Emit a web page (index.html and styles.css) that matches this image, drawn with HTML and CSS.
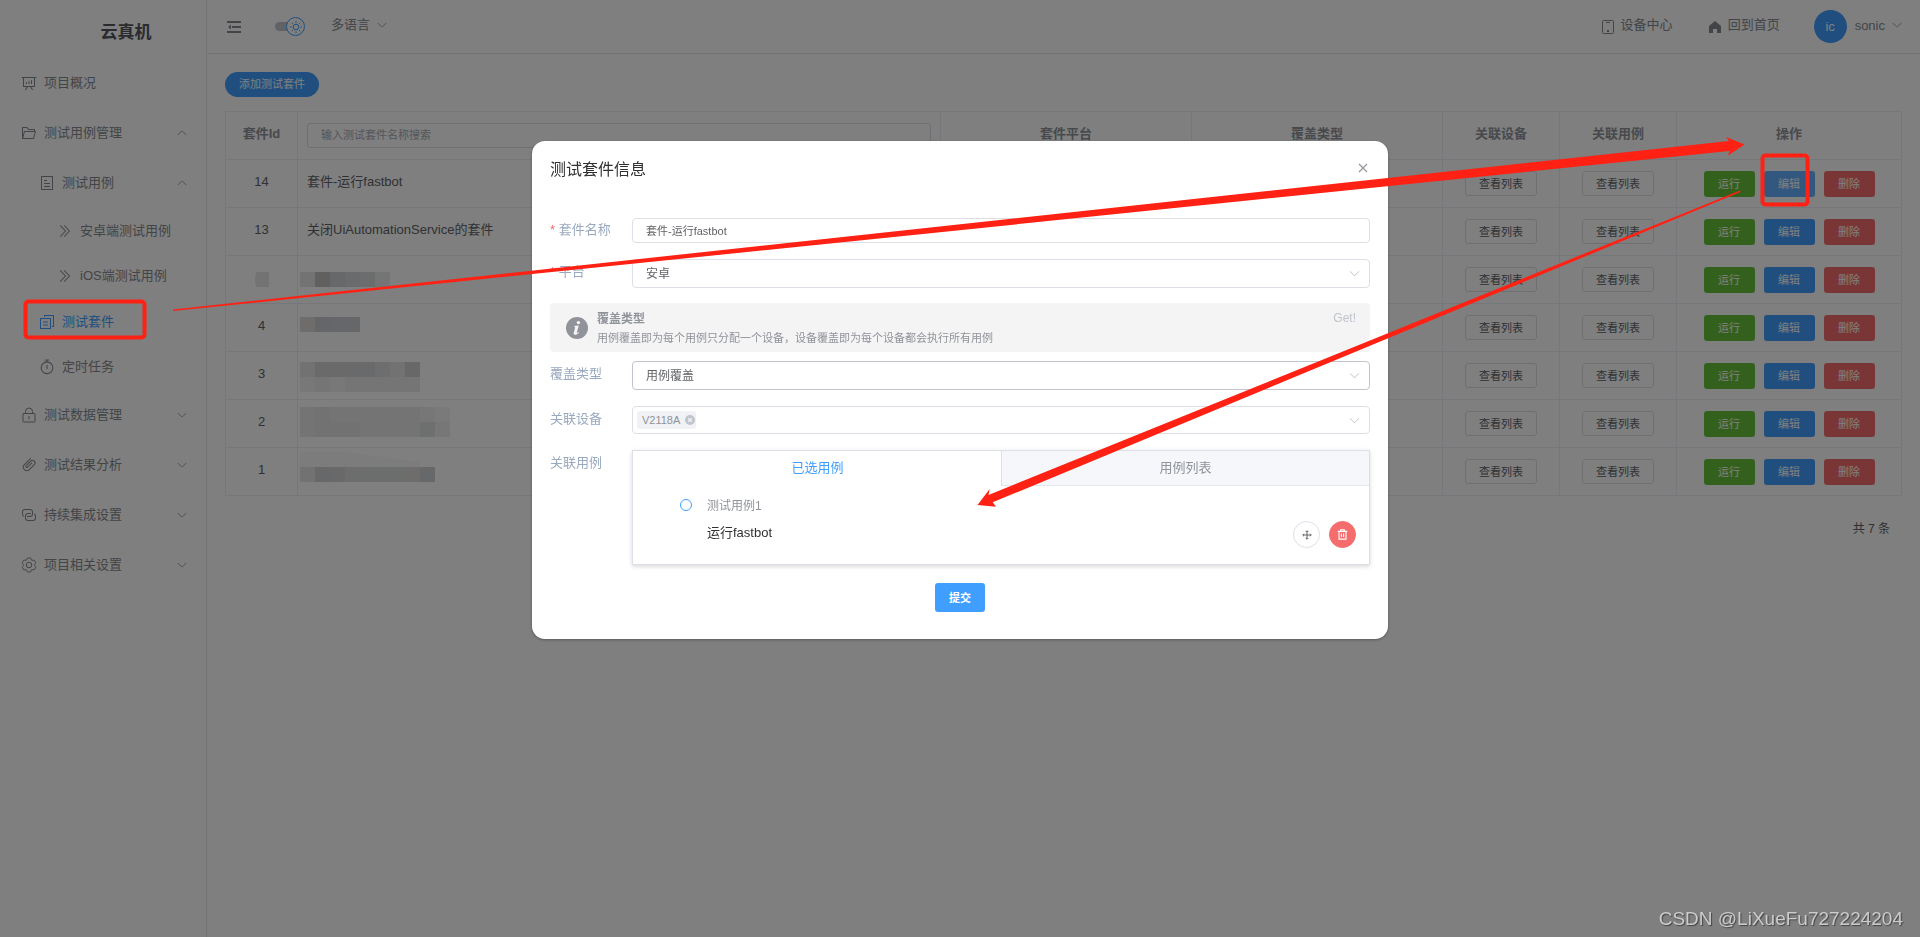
FILE: index.html
```html
<!DOCTYPE html>
<html lang="zh-CN">
<head>
<meta charset="utf-8">
<title>云真机</title>
<link rel="stylesheet" href="styles.css">
</head>
<body>
<svg class="sprite" aria-hidden="true">
  <symbol id="down" viewBox="0 0 1024 1024"><path d="M831.872 340.864 512 652.672 192.128 340.864a30.592 30.592 0 0 0-42.752 0 29.12 29.12 0 0 0 0 41.6L489.664 714.24a32 32 0 0 0 44.672 0l340.288-331.712a29.12 29.12 0 0 0 0-41.728 30.592 30.592 0 0 0-42.752 0z"/></symbol>
  <symbol id="board" viewBox="0 0 1024 1024"><path d="m665.216 768 110.848 192h-73.856L591.36 768H433.024L322.176 960H248.32l110.848-192H160a32 32 0 0 1-32-32V192H64a32 32 0 0 1 0-64h896a32 32 0 1 1 0 64h-64v544a32 32 0 0 1-32 32H665.216zM832 192H192v512h640V192zM352 448a32 32 0 0 1 32 32v64a32 32 0 0 1-64 0v-64a32 32 0 0 1 32-32zm160-64a32 32 0 0 1 32 32v128a32 32 0 0 1-64 0V416a32 32 0 0 1 32-32zm160-64a32 32 0 0 1 32 32v192a32 32 0 1 1-64 0V352a32 32 0 0 1 32-32z"/></symbol>
  <symbol id="folder" viewBox="0 0 1024 1024"><path d="M878.08 448H241.92l-96 384h636.16l96-384zM832 384v-64H485.76L357.504 192H128v448l57.92-231.744A32 32 0 0 1 216.96 384H832zm-24.96 512H96a32 32 0 0 1-32-32V160a32 32 0 0 1 32-32h287.872l128.384 128H864a32 32 0 0 1 32 32v96h23.04a32 32 0 0 1 31.04 39.744l-112 448A32 32 0 0 1 807.04 896z"/></symbol>
  <symbol id="tickets" viewBox="0 0 1024 1024"><path d="M192 128v768h640V128H192zm-32-64h704a32 32 0 0 1 32 32v832a32 32 0 0 1-32 32H160a32 32 0 0 1-32-32V96a32 32 0 0 1 32-32zm160 448h384v64H320v-64zm0-192h192v64H320v-64zm0 384h384v64H320v-64z"/></symbol>
  <symbol id="dright" viewBox="0 0 1024 1024"><path d="M452.864 149.312a29.12 29.12 0 0 1 41.728.064L826.24 489.664a32 32 0 0 1 0 44.672L494.592 874.624a29.12 29.12 0 0 1-41.728 0 30.592 30.592 0 0 1 0-42.752L764.736 512 452.864 192a30.592 30.592 0 0 1 0-42.688zm-256 0a29.12 29.12 0 0 1 41.728.064L570.24 489.664a32 32 0 0 1 0 44.672L238.592 874.624a29.12 29.12 0 0 1-41.728 0 30.592 30.592 0 0 1 0-42.752L508.736 512 196.864 192a30.592 30.592 0 0 1 0-42.688z"/></symbol>
  <symbol id="copy" viewBox="0 0 1024 1024"><path d="M128 320v576h576V320H128zm-32-64h640a32 32 0 0 1 32 32v640a32 32 0 0 1-32 32H96a32 32 0 0 1-32-32V288a32 32 0 0 1 32-32zM960 96v704a32 32 0 0 1-32 32h-96v-64h64V128H384v64h-64V96a32 32 0 0 1 32-32h576a32 32 0 0 1 32 32zM256 672h320v64H256v-64zm0-192h320v64H256v-64z"/></symbol>
  <symbol id="timer" viewBox="0 0 1024 1024"><g fill="none" stroke="currentColor" stroke-width="68" stroke-linecap="round"><circle cx="512" cy="560" r="376"/><path d="M512 400v200M400 66h224M512 66v110"/></g></symbol>
  <symbol id="lock" viewBox="0 0 1024 1024"><g fill="none" stroke="currentColor" stroke-width="64" stroke-linecap="round"><rect x="128" y="416" width="768" height="544" rx="32"/><path d="M288 416V288a224 224 0 0 1 448 0v128M512 608v160"/></g></symbol>
  <symbol id="clip" viewBox="0 0 1024 1024"><path d="M602.496 240.448A192 192 0 1 1 874.048 512l-316.8 316.8A256 256 0 0 1 195.2 466.752L602.496 59.456l45.248 45.248L240.448 512A192 192 0 0 0 512 783.552l316.8-316.8a128 128 0 1 0-181.056-181.056L353.6 579.904a32 32 0 1 0 45.248 45.248l294.144-294.144 45.312 45.248L444.096 670.4a96 96 0 1 1-135.744-135.744l294.144-294.208z"/></symbol>
  <symbol id="link" viewBox="0 0 1024 1024"><path d="M640 384v64H448a128 128 0 0 0-128 128v128a128 128 0 0 0 128 128h320a128 128 0 0 0 128-128V576a128 128 0 0 0-64-110.848V394.88c74.56 26.368 128 97.472 128 181.056v128a192 192 0 0 1-192 192H448a192 192 0 0 1-192-192V576a192 192 0 0 1 192-192h192z"/><path d="M384 640v-64h192a128 128 0 0 0 128-128V320a128 128 0 0 0-128-128H256a128 128 0 0 0-128 128v128a128 128 0 0 0 64 110.848v70.272A192.064 192.064 0 0 1 64 448V320a192 192 0 0 1 192-192h320a192 192 0 0 1 192 192v128a192 192 0 0 1-192 192H384z"/></symbol>
  <symbol id="gear" viewBox="0 0 1024 1024"><g fill="none" stroke="currentColor" stroke-width="64"><path d="M600.704 64a32 32 0 0 1 30.464 22.208l35.2 109.376c14.784 7.232 28.928 15.36 42.432 24.512l112.384-24.192a32 32 0 0 1 34.432 15.36L944.32 364.8a32 32 0 0 1-4.032 37.504l-77.12 85.12a357.12 357.12 0 0 1 0 49.024l77.12 85.248a32 32 0 0 1 4.032 37.504l-88.704 153.6a32 32 0 0 1-34.432 15.296L708.8 803.904c-13.44 9.088-27.648 17.28-42.368 24.512l-35.264 109.376A32 32 0 0 1 600.704 960H423.296a32 32 0 0 1-30.464-22.208L357.696 828.48a351.616 351.616 0 0 1-42.56-24.64l-112.32 24.256a32 32 0 0 1-34.432-15.36L79.68 659.2a32 32 0 0 1 4.032-37.504l77.12-85.248a357.12 357.12 0 0 1 0-48.896l-77.12-85.248A32 32 0 0 1 79.68 364.8l88.704-153.6a32 32 0 0 1 34.432-15.296l112.32 24.256c13.568-9.152 27.776-17.408 42.56-24.64l35.2-109.312A32 32 0 0 1 423.232 64z"/><circle cx="512" cy="512" r="176"/></g></symbol>
  <symbol id="fold" viewBox="0 0 14 12"><path d="M0 0h14v2H0zM5 5h9v2H5zM0 10h14v2H0zM1 6l3-2.500v5z"/></symbol>
  <symbol id="phone" viewBox="0 0 12 14"><rect x=".5" y=".5" width="11" height="13" rx="1" fill="none" stroke="currentColor"/><path d="M4 2h4v1H4zM5 10h2v2H5z"/></symbol>
  <symbol id="home" viewBox="0 0 12 12"><path d="M6 0l6 5v7H8V8H4v4H0V5z"/></symbol>
  <symbol id="sun" viewBox="0 0 12 12"><g fill="none" stroke="currentColor" stroke-width="1"><circle cx="6" cy="6" r="2.8"/><path d="M6 0v1.6M6 10.4V12M0 6h1.6M10.4 6H12M1.8 1.8l1.1 1.1M9.1 9.1l1.1 1.1M10.2 1.8L9.1 2.9M2.9 9.1l-1.1 1.1"/></g></symbol>
  <symbol id="close" viewBox="0 0 10 10"><path d="M1 1l8 8M9 1L1 9" fill="none" stroke="currentColor" stroke-width="1.1"/></symbol>
  <symbol id="tagclose" viewBox="0 0 10 10"><circle cx="5" cy="5" r="5"/><path d="M3.2 3.2l3.6 3.6M6.8 3.2L3.2 6.8" stroke="#f0f2f5" stroke-width="1.3"/></symbol>
  <symbol id="info" viewBox="0 0 22 22"><circle cx="11" cy="11" r="11"/><g fill="#f4f4f5"><circle cx="12.4" cy="5.6" r="1.7"/><path d="M8.2 9l4.6-.6-2 7.1c-.2.8.4.7 1.8-.7l.5.5c-1.700 2.100-3.200 2.700-4.300 2.500-1.200-.2-1.300-1.200-1-2.300l1.300-4.700c.2-.8-.1-1-1.100-1z"/></g></symbol>
  <symbol id="move" viewBox="0 0 10 10"><g fill="none" stroke="currentColor" stroke-width="1"><path d="M5 1v8M1 5h8M3.700 2L5 .7 6.300 2M3.700 8L5 9.300 6.300 8M2 3.700L.7 5 2 6.300M8 3.700L9.300 5 8 6.300"/></g></symbol>
  <symbol id="trash" viewBox="0 0 12 12"><g fill="none" stroke="currentColor" stroke-width="1.200"><path d="M.8 2.600h10.400M4 2.400V.8h4v1.600M2.200 2.800v8.200h7.600V2.800M4.800 4.800v4M7.200 4.800v4"/></g></symbol>
</svg>

<div class="app">
  <aside class="sidebar">
    <h1 class="logo">云真机</h1>
    <nav>
      <ul class="menu">
        <li><a class="item" href="#"><svg class="icon"><use href="#board"/></svg>项目概况</a></li>
        <li>
          <a class="item" href="#"><svg class="icon"><use href="#folder"/></svg>测试用例管理<svg class="arrow open"><use href="#down"/></svg></a>
          <ul class="menu">
            <li>
              <a class="item level2" href="#"><svg class="icon"><use href="#tickets"/></svg>测试用例<svg class="arrow open"><use href="#down"/></svg></a>
              <ul class="menu">
                <li><a class="item leaf level3" href="#"><svg class="icon"><use href="#dright"/></svg>安卓端测试用例</a></li>
                <li><a class="item leaf level3" href="#"><svg class="icon"><use href="#dright"/></svg>iOS端测试用例</a></li>
              </ul>
            </li>
            <li><a class="item leaf level2 active" href="#"><svg class="icon"><use href="#copy"/></svg>测试套件</a></li>
            <li><a class="item leaf level2" href="#"><svg class="icon"><use href="#timer"/></svg>定时任务</a></li>
          </ul>
        </li>
        <li><a class="item" href="#"><svg class="icon"><use href="#lock"/></svg>测试数据管理<svg class="arrow"><use href="#down"/></svg></a></li>
        <li><a class="item" href="#"><svg class="icon"><use href="#clip"/></svg>测试结果分析<svg class="arrow"><use href="#down"/></svg></a></li>
        <li><a class="item" href="#"><svg class="icon"><use href="#link"/></svg>持续集成设置<svg class="arrow"><use href="#down"/></svg></a></li>
        <li><a class="item" href="#"><svg class="icon"><use href="#gear"/></svg>项目相关设置<svg class="arrow"><use href="#down"/></svg></a></li>
      </ul>
    </nav>
  </aside>

  <div class="content">
    <header class="topbar">
      <button class="plain" aria-label="折叠菜单"><svg class="fold"><use href="#fold"/></svg></button>
      <button class="plain theme" role="switch" aria-checked="true" aria-label="主题"><span class="track"></span><span class="knob"><svg><use href="#sun"/></svg></span></button>
      <button class="plain lang"><span class="toptext">多语言</span><svg class="arrow"><use href="#down"/></svg></button>
      <span class="spacer"></span>
      <a class="toplink" href="#"><svg class="phone"><use href="#phone"/></svg><span class="toptext">设备中心</span></a>
      <a class="toplink home" href="#"><svg class="house"><use href="#home"/></svg><span class="toptext">回到首页</span></a>
      <button class="plain user"><span class="avatar">ic</span><span class="name">sonic</span><svg class="arrow"><use href="#down"/></svg></button>
    </header>

    <main class="page">
      <button class="add">添加测试套件</button>
      <table class="suites">
        <colgroup><col class="c-id"><col><col class="c-wide"><col class="c-wide"><col class="c-view"><col class="c-view"><col class="c-ops"></colgroup>
        <thead>
          <tr><th>套件Id</th><th class="left control"><input class="search" type="text" placeholder="输入测试套件名称搜索" aria-label="套件名称"></th><th>套件平台</th><th>覆盖类型</th><th>关联设备</th><th>关联用例</th><th>操作</th></tr>
        </thead>
        <tbody>
          <tr><td>14</td><td class="left">套件-运行fastbot</td><td></td><td></td><td class="control"><button class="view">查看列表</button></td><td class="control"><button class="view">查看列表</button></td><td class="control"><div class="ops"><button class="op run">运行</button><button class="op edit hover">编辑</button><button class="op del">删除</button></div></td></tr>
          <tr><td>13</td><td class="left">关闭UiAutomationService的套件</td><td></td><td></td><td class="control"><button class="view">查看列表</button></td><td class="control"><button class="view">查看列表</button></td><td class="control"><div class="ops"><button class="op run">运行</button><button class="op edit">编辑</button><button class="op del">删除</button></div></td></tr>
          <tr><td class="control"><svg class="mask-id" viewBox="0 0 14 15"><path fill="#e6e6e6" d="M1 0h13v15H1L0 8z"/></svg></td><td class="masked"><svg class="mask" viewBox="0 0 160 47"><g transform="translate(0 16)"><path fill="#e6e6e6" d="M0 0h15v15H0z"/><path fill="#c2c1bc" d="M15 0h15v15H15z"/><path fill="#cdd0d5" d="M30 0h15v15H30z"/><path fill="#d5d6d8" d="M45 0h15v15H45z"/><path fill="#d9dada" d="M60 0h15v15H60z"/><path fill="#eaeaea" d="M75 0h15v15H75z"/></g></svg></td><td></td><td></td><td class="control"><button class="view">查看列表</button></td><td class="control"><button class="view">查看列表</button></td><td class="control"><div class="ops"><button class="op run">运行</button><button class="op edit">编辑</button><button class="op del">删除</button></div></td></tr>
          <tr><td>4</td><td class="masked"><svg class="mask" viewBox="0 0 160 47"><g transform="translate(0 13)"><path fill="#dddbd9" d="M0 0h15v15H0z"/><path fill="#c9ccd0" d="M15 0h15v15H15z"/><path fill="#cdcfd4" d="M30 0h15v15H30z"/><path fill="#cdcfd0" d="M45 0h15v15H45z"/></g></svg></td><td></td><td></td><td class="control"><button class="view">查看列表</button></td><td class="control"><button class="view">查看列表</button></td><td class="control"><div class="ops"><button class="op run">运行</button><button class="op edit">编辑</button><button class="op del">删除</button></div></td></tr>
          <tr><td>3</td><td class="masked"><svg class="mask" viewBox="0 0 160 47"><g transform="translate(0 10)"><path fill="#e4e4e4" d="M0 0h15v15H0zM90 0h15v15H90z"/><path fill="#d4d4d4" d="M15 0h45v15H15z"/><path fill="#d3d5d7" d="M60 0h15v15H60z"/><path fill="#dadddb" d="M75 0h15v15H75z"/><path fill="#d0d0d0" d="M105 0h15v15h-15z"/><path fill="#f0f0f0" d="M0 15h15v15H0zM30 15h15v15H30z"/><path fill="#eaeaea" d="M15 15h15v15H15zM45 15h75v15H45z"/></g></svg></td><td></td><td></td><td class="control"><button class="view">查看列表</button></td><td class="control"><button class="view">查看列表</button></td><td class="control"><div class="ops"><button class="op run">运行</button><button class="op edit">编辑</button><button class="op del">删除</button></div></td></tr>
          <tr><td>2</td><td class="masked"><svg class="mask" viewBox="0 0 160 47"><g transform="translate(0 7)"><path fill="#e8e8e8" d="M0 0h120v15H0zM0 15h15v15H0zM60 15h60v15H60z"/><path fill="#e4e4e4" d="M15 0h15v15H15zM15 15h45v15H15z"/><path fill="#efefef" d="M120 0h15v15h-15z"/><path fill="#f4f4f4" d="M135 0h15v15h-15z"/><path fill="#dde0de" d="M120 15h15v15h-15z"/><path fill="#eee" d="M135 15h15v15h-15z"/></g></svg></td><td></td><td></td><td class="control"><button class="view">查看列表</button></td><td class="control"><button class="view">查看列表</button></td><td class="control"><div class="ops"><button class="op run">运行</button><button class="op edit">编辑</button><button class="op del">删除</button></div></td></tr>
          <tr><td>1</td><td class="masked"><svg class="mask" viewBox="0 0 160 47"><g transform="translate(0 4)"><path fill="#f8f8f8" d="M0 0h45l75 10v5H0z"/><path fill="#e4e4e4" d="M0 15h15v15H0z"/><path fill="#cfd0d4" d="M15 15h15v15H15zM120 15h15v15h-15z"/><path fill="#d2d2d2" d="M30 15h15v15H30z"/><path fill="#dadada" d="M45 15h15v15H45z"/><path fill="#d9dcda" d="M60 15h45v15H60z"/><path fill="#dcdad7" d="M105 15h15v15h-15z"/></g></svg></td><td></td><td></td><td class="control"><button class="view">查看列表</button></td><td class="control"><button class="view">查看列表</button></td><td class="control"><div class="ops"><button class="op run">运行</button><button class="op edit">编辑</button><button class="op del">删除</button></div></td></tr>
        </tbody>
      </table>
      <p class="total">共 7 条</p>
    </main>
  </div>
</div>

<div class="overlay">
  <section class="dialog" role="dialog" aria-modal="true" aria-labelledby="dialog-title">
    <header class="dialog-head"><h2 id="dialog-title">测试套件信息</h2><button class="plain close" aria-label="关闭"><svg><use href="#close"/></svg></button></header>
    <form class="form">
      <div class="row small"><label for="name"><span class="star">*</span> 套件名称</label><input class="field input" id="name" type="text" value="套件-运行fastbot"></div>
      <div class="row"><label for="platform"><span class="star">*</span> 平台</label><div class="selectbox"><select class="field" id="platform"><option>安卓</option><option>iOS</option></select><svg class="caret"><use href="#down"/></svg></div></div>
      <div class="alert" role="note">
        <svg class="info"><use href="#info"/></svg>
        <div class="alert-text"><strong>覆盖类型</strong><p>用例覆盖即为每个用例只分配一个设备，设备覆盖即为每个设备都会执行所有用例</p></div>
        <button class="plain get" type="button">Get!</button>
      </div>
      <div class="row"><label for="cover">覆盖类型</label><div class="selectbox"><select class="field focus" id="cover"><option>用例覆盖</option><option>设备覆盖</option></select><svg class="caret"><use href="#down"/></svg></div></div>
      <div class="row"><span class="label" id="devices">关联设备</span><div class="selectbox" role="group" aria-labelledby="devices"><div class="field tags"><span class="tag">V2118A<button class="plain" type="button" aria-label="移除 V2118A"><svg><use href="#tagclose"/></svg></button></span></div><svg class="caret"><use href="#down"/></svg></div></div>
      <div class="row"><span class="label">关联用例</span>
        <div class="cases">
          <div class="tabs" role="tablist"><button class="tab on" type="button" role="tab" aria-selected="true">已选用例</button><button class="tab" type="button" role="tab" aria-selected="false">用例列表</button></div>
          <div class="case">
            <span class="dot"></span>
            <div class="case-text"><span class="case-no">测试用例1</span><span class="case-name">运行fastbot</span></div>
            <div class="case-ops"><button class="round" type="button" aria-label="移动"><svg class="move"><use href="#move"/></svg></button><button class="round danger" type="button" aria-label="删除"><svg class="trash"><use href="#trash"/></svg></button></div>
          </div>
        </div>
      </div>
      <button class="submit" type="button">提交</button>
    </form>
  </section>
</div>

<svg class="marks" viewBox="0 0 1920 937" aria-hidden="true">
  <g fill="none" stroke="#ff2113" stroke-width="4"><rect x="25.500" y="301.500" width="119" height="36" rx="3"/><rect x="1762.500" y="155.500" width="45" height="49" rx="3"/></g>
  <g fill="#ff2113"><path d="M173 309.500L1729 141l-3-4 18.500 7.500L1728 155.500l1.500-4.500L173 311z"/><path d="M1740 190.500L988.500 495l1.200-6L977.500 505l18.500 1.700-3.300-4.400L1740.500 192z"/></g>
</svg>
<div class="watermark">CSDN @LiXueFu727224204</div>
</body>
</html>
```
FILE: styles.css
```css
* { box-sizing: border-box; }
body { margin: 0; font-family: "Liberation Sans", "Noto Sans CJK SC", sans-serif; font-size: 13px; line-height: 20px; color: #606266; background: #fff; }
button, input, select { font-family: inherit; color: inherit; margin: 0; }
button { cursor: pointer; }
a { color: inherit; text-decoration: none; }
svg { display: block; fill: currentColor; flex: none; }
h1, h2, p, ul { margin: 0; padding: 0; }
ul { list-style: none; }
.sprite { position: absolute; width: 0; height: 0; }
.plain { display: flex; align-items: center; padding: 0; border: 0; background: none; font-size: 13px; line-height: 20px; }
.arrow { width: 12px; height: 12px; color: #909399; }

.app { display: flex; min-height: 100vh; }
.sidebar { flex: none; width: 207px; border-right: 1px solid #e6e6e6; }
.logo { height: 58px; padding: 8px 0 0 46px; font-size: 17px; line-height: 50px; text-align: center; color: #55575c; }
.menu .menu { padding-bottom: 1px; }
.item { display: flex; align-items: center; height: 50px; padding: 0 18px 0 21px; color: #86898e; }
.item .icon { width: 16px; height: 16px; margin-right: 7px; }
.item .arrow { margin-left: auto; }
.item .open { transform: rotate(180deg); }
.leaf { height: 45px; }
.level2 { padding-left: 39px; }
.level3 { padding-left: 57px; }
.item.active { color: #409eff; }

.content { flex: 1; min-width: 0; }
.topbar { display: flex; align-items: center; height: 54px; padding: 0 17px 0 20px; border-bottom: 1px solid #e6e6e6; color: #86898e; }
.toptext { padding-bottom: 4px; }
.fold { width: 14px; height: 12px; }
.theme { margin-left: 34px; }
.track { width: 18px; height: 9px; margin-right: -7px; border-radius: 5px 0 0 5px; background: #c0c4cc; }
.knob { display: grid; place-items: center; width: 19px; height: 19px; border: 1px solid #409eff; border-radius: 50%; background: #fff; color: #409eff; }
.knob svg { width: 12px; height: 12px; }
.lang { margin-left: 26px; gap: 6px; }
.topbar .arrow { margin-bottom: 3px; }
.spacer { flex: 1; }
.toplink { display: flex; align-items: center; gap: 7px; }
.home { margin-left: 36px; }
.phone { width: 12px; height: 14px; }
.house { width: 12px; height: 12px; }
.user { margin-left: 34px; }
.avatar { width: 33px; height: 33px; border-radius: 50%; background: #409eff; color: #fff; font-size: 13px; line-height: 33px; text-align: center; }
.name { margin: 0 6px 0 8px; padding-bottom: 2px; }

.page { padding: 18px; }
.add { display: block; height: 25px; margin-bottom: 14px; padding: 0 14px; border: 0; border-radius: 13px; background: #409eff; color: #fff; font-size: 11px; line-height: 25px; }
.suites { width: 100%; table-layout: fixed; border-collapse: collapse; color: #606266; }
.c-id { width: 72px; }
.c-wide { width: 251px; }
.c-view { width: 117px; }
.c-ops { width: 225px; }
.suites th, .suites td { height: 48px; padding: 0 0 3px; border: 1px solid #ebeef5; text-align: center; }
.suites th { color: #909399; }
.suites .left { padding: 0 9px 3px; text-align: left; }
.suites .control { padding-bottom: 0; }
.suites .masked { padding: 0 2px; }
.mask { width: 160px; height: 47px; }
.mask-id { width: 14px; height: 15px; margin: 0 auto; }
.search { display: block; width: 100%; height: 25px; padding: 0 13px 1px; border: 1px solid #dcdfe6; border-radius: 3px; background: #fff; font-size: 11px; }
.search::placeholder { color: #a8abb2; }
.view { height: 25px; padding: 0 13px; border: 1px solid #dcdfe6; border-radius: 3px; background: #fff; font-size: 11px; line-height: 22px; }
.ops { display: flex; justify-content: center; gap: 9px; }
.op { width: 51px; height: 26px; padding: 0; border: 0; border-radius: 3px; color: #fff; font-size: 11px; line-height: 26px; }
.run { background: #67c23a; }
.edit { background: #409eff; }
.edit.hover { background: #66b1ff; }
.del { background: #f56c6c; }
.total { margin-top: 23px; padding-right: 12px; font-size: 12px; text-align: right; }

.overlay { position: fixed; inset: 0; overflow: auto; padding: 141px 16px 16px; background: rgba(0, 0, 0, .5); }
.dialog { width: 856px; max-width: 100%; margin: 0 auto; padding: 0 18px 27px; border-radius: 13px; background: #fff; box-shadow: 0 1px 3px rgba(0, 0, 0, .3); }
.dialog-head { display: flex; align-items: flex-start; justify-content: space-between; height: 77px; padding: 18px 2px 0 0; }
.dialog-head h2 { font-size: 16px; font-weight: 400; line-height: 22px; color: #303133; }
.close { height: 17px; color: #909399; }
.close svg { width: 10px; height: 10px; }
.form { display: flex; flex-direction: column; }
.row { display: flex; align-items: flex-start; margin-bottom: 16px; }
.row label, .label { flex: none; width: 82px; line-height: 26px; color: #99a9bf; }
.small label { line-height: 23px; }
.star { color: #f56c6c; }
.field { display: block; width: 100%; height: 29px; padding: 0 13px; border: 1px solid #dcdfe6; border-radius: 4px; background: #fff; font-size: 12px; color: #606266; appearance: none; }
.input { flex: 1; min-width: 0; height: 25px; padding-bottom: 2px; font-size: 11px; }
.focus { border-color: #c0c4cc; }
.selectbox { position: relative; flex: 1; min-width: 0; }
.caret { position: absolute; top: 8px; right: 9px; width: 13px; height: 13px; color: #c0c4cc; pointer-events: none; }
.tags { display: flex; align-items: center; height: 28px; padding: 0 4px; }
.tag { display: flex; align-items: center; gap: 5px; height: 18px; padding: 0 1px 0 5px; border-radius: 3px; background: #f0f2f5; font-size: 11px; color: #909399; }
.tag svg { width: 10px; height: 10px; color: #c0c4cc; }
.alert { display: flex; align-items: center; gap: 9px; height: 49px; margin: -1px 0 9px; padding: 0 14px 0 16px; border-radius: 4px; background: #f4f4f5; color: #909399; }
.info { width: 22px; height: 22px; }
.alert-text { flex: 1; padding-top: 2px; }
.alert strong { display: block; font-size: 12px; line-height: 18px; }
.alert p { font-size: 11px; line-height: 20px; }
.get { align-self: flex-start; padding-top: 5px; font-size: 12px; color: #c0c4cc; }
.cases { flex: 1; min-width: 0; border: 1px solid #dcdfe6; box-shadow: 0 2px 4px rgba(0, 0, 0, .12), 0 0 6px rgba(0, 0, 0, .04); }
.tabs { display: flex; }
.tab { flex: 1; height: 35px; padding: 0 0 3px; border: 0; border-bottom: 1px solid #e4e7ed; border-left: 1px solid #dcdfe6; background: #f5f7fa; font-size: 13px; color: #909399; }
.tab.on { border-color: transparent; background: #fff; color: #409eff; }
.case { display: flex; align-items: flex-start; height: 78px; padding: 8px 13px 0 47px; }
.dot { width: 12px; height: 12px; margin: 5px 15px 0 0; border: 1px solid #409eff; border-radius: 50%; }
.case-text { display: flex; flex: 1; flex-direction: column; gap: 7px; padding-top: 2px; }
.case-no { font-size: 12px; color: #909399; }
.case-name { color: #303133; }
.case-ops { display: flex; gap: 9px; padding-top: 27px; }
.round { display: grid; place-items: center; width: 27px; height: 27px; padding: 0; border: 1px solid #dcdfe6; border-radius: 50%; background: #fff; }
.danger { border-color: #f56c6c; background: #f56c6c; color: #fff; }
.move { width: 10px; height: 10px; }
.trash { width: 11px; height: 11px; }
.submit { align-self: center; width: 50px; height: 29px; margin-top: 2px; padding: 0 0 2px; border: 0; border-radius: 3px; background: #409eff; color: #fff; font-size: 11px; font-weight: 700; }

.marks { position: absolute; top: 0; left: 0; width: 1920px; height: 937px; pointer-events: none; }
.watermark { position: fixed; right: 17px; bottom: 6px; font-size: 19px; line-height: 24px; color: #ccc; text-shadow: 1px 1px 1px #444; }
```
